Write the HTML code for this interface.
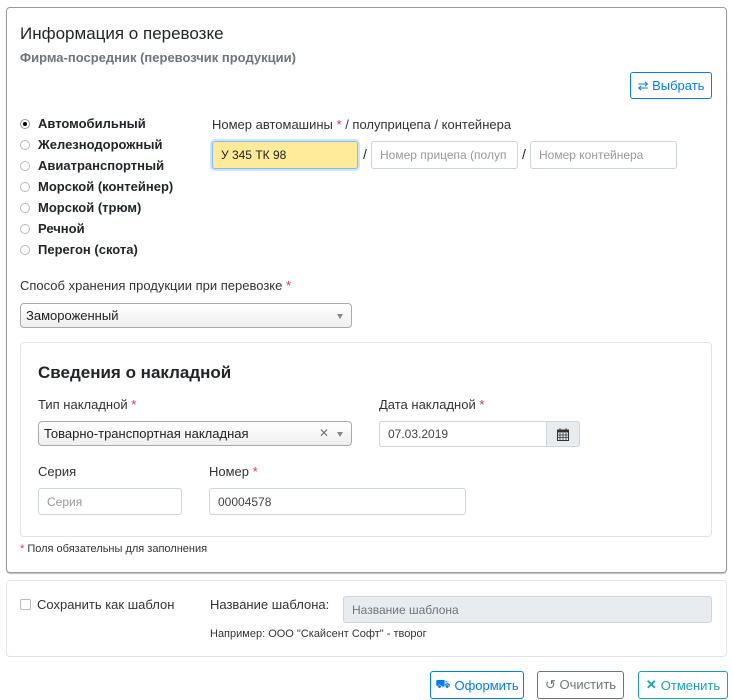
<!DOCTYPE html>
<html><head><meta charset="utf-8"><style>
*{box-sizing:border-box;margin:0;padding:0}
body{width:733px;height:700px;background:#fff;font-family:"Liberation Sans",sans-serif;color:#212529;position:relative;overflow:hidden;font-size:13px}
.a{position:absolute;white-space:nowrap}
.panel{position:absolute;border:1px solid #9a9a9a;border-radius:4px}
.inp{position:absolute;border:1px solid #ced4da;border-radius:3px;background:#fff;font-size:12px;color:#999;padding-left:8px;display:flex;align-items:center}
.r{color:#dc3545}
.rad{position:absolute;left:20px;width:10px;height:10px;border:1px solid #bbb;border-radius:50%}
.rl{position:absolute;left:38px;font-weight:bold;font-size:13px}
.btn{position:absolute;top:671px;height:28px;border:1px solid;border-radius:3px;font-size:13px;display:flex;align-items:center;justify-content:center;gap:4px}
.sel{position:absolute;border:1px solid #aaa;border-radius:4px;background:linear-gradient(#fff,#eee);font-size:13px;padding-left:5px;display:flex;align-items:center;color:#222}
.arr{position:absolute;right:8px;top:10px;border-left:3px solid transparent;border-right:3px solid transparent;border-top:5px solid #888}
</style></head><body>
<div class="panel" style="left:6px;top:7px;width:721px;height:566px;box-shadow:0 1px 1px #bbb"></div>
<div class="a" style="left:20px;top:24px;font-size:17px">Информация о перевозке</div>
<div class="a" style="left:20px;top:50px;font-size:13px;font-weight:bold;color:#6c757d">Фирма-посредник (перевозчик продукции)</div>
<div class="btn" style="left:630px;top:72px;width:82px;height:27px;border-color:#007bff;color:#007bff">⇄ Выбрать</div>

<div class="rad" style="top:119px;border-color:#999"><div style="margin:2px;width:4px;height:4px;border-radius:50%;background:#000"></div></div>
<div class="rl" style="top:116px">Автомобильный</div>
<div class="rad" style="top:140px"></div><div class="rl" style="top:137px">Железнодорожный</div>
<div class="rad" style="top:161px"></div><div class="rl" style="top:158px">Авиатранспортный</div>
<div class="rad" style="top:182px"></div><div class="rl" style="top:179px">Морской (контейнер)</div>
<div class="rad" style="top:203px"></div><div class="rl" style="top:200px">Морской (трюм)</div>
<div class="rad" style="top:224px"></div><div class="rl" style="top:221px">Речной</div>
<div class="rad" style="top:245px"></div><div class="rl" style="top:242px">Перегон (скота)</div>

<div class="a" style="left:212px;top:117px;font-size:13px;color:#333">Номер автомашины <span class="r">*</span> / полуприцепа / контейнера</div>
<div class="inp" style="left:212px;top:141px;width:146px;height:28px;background:#ffeb99;border-color:#80bdff;box-shadow:0 0 0 2px #cfe3fb;color:#222">У 345 ТК 98</div>
<div class="a" style="left:363px;top:146px;font-size:14px">/</div>
<div class="inp" style="left:371px;top:141px;width:147px;height:28px;overflow:hidden">Номер прицепа (полуп</div>
<div class="a" style="left:522px;top:146px;font-size:14px">/</div>
<div class="inp" style="left:530px;top:141px;width:147px;height:28px">Номер контейнера</div>

<div class="a" style="left:20px;top:278px;font-size:13px;color:#333">Способ хранения продукции при перевозке <span class="r">*</span></div>
<div class="sel" style="left:20px;top:303px;width:332px;height:25px">Замороженный<div class="arr"></div></div>

<div class="panel" style="left:20px;top:342px;width:692px;height:195px;border-color:#e3e3e3"></div>
<div class="a" style="left:38px;top:363px;font-size:17px;font-weight:bold">Сведения о накладной</div>
<div class="a" style="left:38px;top:397px;color:#333">Тип накладной <span class="r">*</span></div>
<div class="a" style="left:379px;top:397px;color:#333">Дата накладной <span class="r">*</span></div>
<div class="sel" style="left:38px;top:421px;width:314px;height:25px">Товарно-транспортная накладная<span style="position:absolute;right:22px;top:4px;color:#777;font-size:12px">✕</span><div class="arr"></div></div>
<div class="inp" style="left:379px;top:421px;width:201px;height:26px;color:#444">07.03.2019</div>
<div class="a" style="left:546px;top:421px;width:34px;height:26px;background:#e9ecef;border:1px solid #ced4da;border-radius:0 3px 3px 0">
<svg width="12" height="13" style="position:absolute;left:10px;top:6px" viewBox="0 0 12 13"><rect x="0.5" y="2" width="11" height="10.5" fill="none" stroke="#333"/><rect x="0.5" y="2" width="11" height="2.5" fill="#333"/><path d="M3 0v3M9 0v3M0 7h12M0 9.5h12M3 5v8M6 5v8M9 5v8" stroke="#333" stroke-width="0.8"/></svg></div>
<div class="a" style="left:38px;top:464px;color:#333">Серия</div>
<div class="a" style="left:209px;top:464px;color:#333">Номер <span class="r">*</span></div>
<div class="inp" style="left:38px;top:488px;width:144px;height:27px">Серия</div>
<div class="inp" style="left:209px;top:488px;width:257px;height:27px;color:#444">00004578</div>
<div class="a" style="left:20px;top:543px;font-size:11px;color:#333"><span class="r">*</span> Поля обязательны для заполнения</div>

<div class="panel" style="left:6px;top:580px;width:721px;height:77px;border-color:#e3e3e3"></div>
<div class="a" style="left:20px;top:599px;width:11px;height:11px;border:1px solid #bbb;border-radius:2px"></div>
<div class="a" style="left:37px;top:597px;color:#333">Сохранить как шаблон</div>
<div class="a" style="left:210px;top:597px;color:#333">Название шаблона:</div>
<div class="inp" style="left:343px;top:596px;width:369px;height:27px;background:#e9ecef;color:#6c757d">Название шаблона</div>
<div class="a" style="left:210px;top:628px;font-size:11px;color:#333">Например: ООО "Скайсент Софт" - творог</div>

<div class="btn" style="left:430px;width:94px;border-color:#007bff;color:#007bff"><span style="font-size:12px">⛟</span>Оформить</div>
<div class="btn" style="left:537px;width:87px;border-color:#6c757d;color:#6c757d">↺ Очистить</div>
<div class="btn" style="left:638px;width:90px;border-color:#17a2b8;color:#17a2b8"><b>✕</b> Отменить</div>
</body></html>
